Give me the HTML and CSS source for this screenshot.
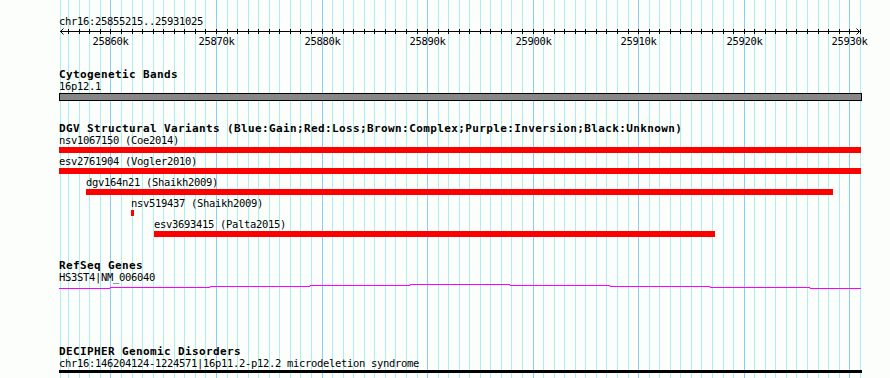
FILE: index.html
```html
<!DOCTYPE html>
<html lang="en">
<head>
<meta charset="utf-8">
<title>chr16:25855215..25931025</title>
<link rel="stylesheet" href="styles.css">
</head>
<body>
<div class="browser">
  <svg class="grid" id="grid" width="890" height="378" aria-hidden="true"></svg>

  <section class="track ruler">
    <div class="label">chr16:25855215..25931025</div>
    <svg class="axis" id="axis" width="831" height="20">
      <line class="axis-line" x1="1" y1="4.5" x2="801" y2="4.5"></line>
      <path class="arrow" d="M4.5 1.5 L1.5 4.5 L4.5 7.5"></path>
      <path class="arrow" d="M797.5 1.5 L800.5 4.5 L797.5 7.5"></path>
    </svg>
  </section>

  <section class="track cyto">
    <div class="title">Cytogenetic Bands</div>
    <div class="label">16p12.1</div>
    <div class="band"></div>
  </section>

  <section class="track dgv">
    <div class="title">DGV Structural Variants (Blue:Gain;Red:Loss;Brown:Complex;Purple:Inversion;Black:Unknown)</div>
    <div class="feature" style="margin-left:0px">
      <div class="label">nsv1067150 (Coe2014)</div>
      <div class="bar" style="width:802px"></div>
    </div>
    <div class="feature" style="margin-left:0px">
      <div class="label">esv2761904 (Vogler2010)</div>
      <div class="bar" style="width:802px"></div>
    </div>
    <div class="feature" style="margin-left:27px">
      <div class="label">dgv164n21 (Shaikh2009)</div>
      <div class="bar" style="width:747px"></div>
    </div>
    <div class="feature" style="margin-left:72px">
      <div class="label">nsv519437 (Shaikh2009)</div>
      <div class="bar" style="width:3px"></div>
    </div>
    <div class="feature" style="margin-left:95px">
      <div class="label">esv3693415 (Palta2015)</div>
      <div class="bar" style="width:561px"></div>
    </div>
  </section>

  <section class="track refseq">
    <div class="title">RefSeq Genes</div>
    <div class="label">HS3ST4|NM_006040</div>
    <svg class="gene" width="803" height="5">
      <path d="M0 4.5 H51 V3.5 H151 V2.5 H251 V1.5 H351 V0.5 H451 V1.5 H551 V2.5 H651 V3.5 H751 V4.5 H802"></path>
    </svg>
  </section>

  <section class="track decipher">
    <div class="title">DECIPHER Genomic Disorders</div>
    <div class="label">chr16:146204124-1224571|16p11.2-p12.2 microdeletion syndrome</div>
    <div class="disorder"></div>
  </section>
</div>
<script src="script.js"></script>
</body>
</html>
```

FILE: styles.css
```css
* {
  box-sizing: border-box;
}

html,
body {
  margin: 0;
  padding: 0;
  background: #fcfefc;
}

.browser {
  position: relative;
  width: 890px;
  height: 378px;
  overflow: hidden;
  font-family: "DejaVu Sans Mono", "Liberation Mono", monospace;
  color: #000;
}

.grid {
  position: absolute;
  left: 0;
  top: 0;
  z-index: 0;
}

.grid .minor {
  stroke: #afeeee;
  stroke-width: 1;
}

.grid .major {
  stroke: #87cefa;
  stroke-width: 1;
}

.track {
  position: relative;
  z-index: 1;
  padding-left: 59px;
}

.title {
  font-weight: bold;
  font-size: 11px;
  letter-spacing: 0.38px;
  line-height: 11px;
  height: 11px;
  margin-bottom: 1px;
  white-space: pre;
}

.label {
  font-size: 10.5px;
  letter-spacing: -0.32px;
  line-height: 11px;
  height: 11px;
  white-space: pre;
}

/* ruler */
.ruler {
  padding-top: 16px;
}

.axis {
  display: block;
  overflow: visible;
}

.axis-line,
.tick,
.arrow {
  stroke: #000;
  stroke-width: 1;
  fill: none;
}

.tick-label {
  font-family: "DejaVu Sans Mono", "Liberation Mono", monospace;
  font-size: 10.5px;
  letter-spacing: -0.32px;
  fill: #000;
}

/* cytogenetic bands */
.cyto {
  margin-top: 22px;
}

.band {
  margin-top: 1px;
  width: 803px;
  height: 8px;
  background: #878787;
  border: 1px solid #000;
}

/* DGV */
.dgv {
  margin-top: 22px;
}

.dgv .title {
  margin-bottom: 0;
}

.feature {
  padding-top: 1px;
  padding-bottom: 2px;
}

.bar {
  margin-top: 1px;
  height: 6px;
  background: #ff0000;
}

/* RefSeq */
.refseq {
  margin-top: 21px;
}

.gene {
  display: block;
  margin-top: 1px;
}

.gene path {
  stroke: #ff00ff;
  stroke-width: 1;
  fill: none;
}

/* DECIPHER */
.decipher {
  margin-top: 57px;
}

.disorder {
  margin-top: 1px;
  width: 803px;
  height: 3px;
  background: #000;
}
```

FILE: script.js
```js
(function () {
  var START = 25855215;
  var END = 25931025;
  var X0 = 60;
  var W = 800;
  var OFFSET = 59;
  var scale = W / (END - START);
  var NS = "http://www.w3.org/2000/svg";

  function px(bp) {
    return Math.round(X0 + (bp - START) * scale);
  }

  function el(parent, name, attrs, text) {
    var e = document.createElementNS(NS, name);
    for (var k in attrs) e.setAttribute(k, attrs[k]);
    if (text) e.textContent = text;
    parent.appendChild(e);
    return e;
  }

  var grid = document.getElementById("grid");
  var axis = document.getElementById("axis");

  el(grid, "line", { x1: 60.5, y1: 0, x2: 60.5, y2: 378, "class": "minor" });

  for (var k = Math.ceil(START / 1000); k * 1000 <= END; k++) {
    var x = px(k * 1000) + 0.5;
    var major = k % 10 === 0;
    el(grid, "line", { x1: x, y1: 0, x2: x, y2: 378, "class": major ? "major" : "minor" });
    var ax = x - OFFSET;
    el(axis, "line", { x1: ax, y1: 2, x2: ax, y2: 7, "class": "tick" });
    if (major) {
      el(axis, "text", { x: ax, y: 18, "text-anchor": "middle", "class": "tick-label" }, k + "k");
    }
  }
})();
```
